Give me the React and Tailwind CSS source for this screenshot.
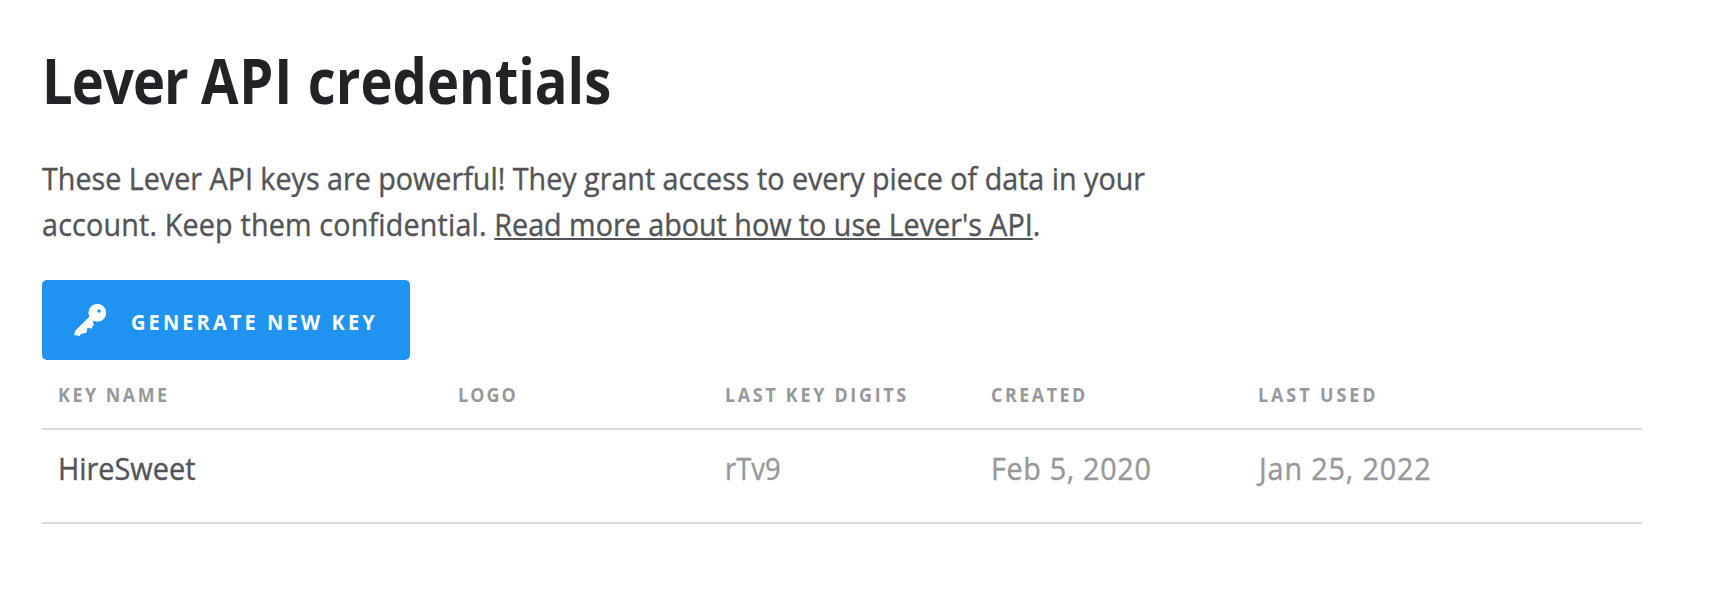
const columns = ["Key name", "Logo", "Last key digits", "Created", "Last used"];
const labelTracking = ["tracking-[2.7px]", "tracking-[2.2px]", "tracking-[2.9px]", "tracking-[2.7px]", "tracking-[3.15px]"];
const keys = [{ name: "HireSweet", digits: "rTv9", created: "Feb 5, 2020", used: "Jan 25, 2022" }];
const gridClass = "grid grid-cols-[400px_266.67px_266.67px_266.67px_400px] border-b-2 border-[#d8d8d9]";
const cellText = "block w-max origin-left";

function KeyIcon() {
  return (
    <svg className="h-[34px] w-[34px] shrink-0" viewBox="0 0 34 34" fill="#fff">
      <path
        fillRule="evenodd"
        d="M24.3 1A8.8 8.8 0 1 1 20.7 17.83L19.8 19.2L21.1 21.4L20.2 23.1L19.3 22.7L19.2 24.7L18.1 26.1L17 24.7L14.1 25.5L13.6 29.8L7.8 31L6.8 32.9L1.2 31.9L1.9 28.1L16.4 13.7A8.8 8.8 0 0 1 24.3 1ZM26 6.3A1.7 1.7 0 1 0 26 9.7A1.7 1.7 0 1 0 26 6.3Z"
      />
    </svg>
  );
}

export default function App() {
  return (
    <main className="min-h-[606px] w-[1730px] overflow-hidden bg-white pt-12 pl-[42px] font-['Open_Sans','Noto_Sans',sans-serif] text-[#535457]">
      <h1 className="w-max origin-left scale-x-[0.862] text-[63px] leading-[64px] font-bold text-[#222327]">
        <span className="tracking-[-1.05px]">Lever </span>
        <span className="tracking-[0.9px]">API </span>
        credentials
      </h1>
      <p className="mt-[43px] text-[31.5px] leading-[46px] whitespace-nowrap [-webkit-text-stroke:0.4px_currentColor]">
        <span className="block w-max origin-left scale-x-[0.911]">
          These Lever API keys are powerful! They grant access to every piece of data in your
        </span>
        <span className="block w-max origin-left scale-x-[0.911]">
          <span className="tracking-[0.2px]">account. Keep them confidential. </span>
          <a className="underline decoration-2 underline-offset-[2px] [text-decoration-skip-ink:none]">Read more about how to use Lever's API</a>.
        </span>
      </p>
      <button className="mt-[33px] flex h-20 w-[368px] items-center rounded-[5px] bg-[#2093f1] pl-[31px] text-white">
        <KeyIcon />
        <span className="ml-6 w-max origin-left scale-x-[0.91] pt-[2px] text-[22px] font-bold tracking-[3.4px] whitespace-nowrap uppercase">
          Generate new key
        </span>
      </button>
      <section className="w-[1600px]">
        <div className={`${gridClass} h-[70px] pt-[21px] text-[19px] leading-7 font-bold text-[#97989a] uppercase`}>
          {columns.map((c, i) => (
            <div key={c} className="pl-4">
              <span className={`${cellText} scale-x-[0.94] ${labelTracking[i]}`}>{c}</span>
            </div>
          ))}
        </div>
        {keys.map((k) => (
          <div key={k.name} className={`${gridClass} h-[94px] pt-[15px] text-[31.5px] leading-[46px] text-[#97989a] [-webkit-text-stroke:0.4px_currentColor]`}>
            <div className="pl-[15.5px] text-[#535457]"><span className={`${cellText} scale-x-[0.916]`}>{k.name}</span></div>
            <div />
            <div className="pl-[16px]"><span className={`${cellText} scale-x-[0.87]`}>{k.digits}</span></div>
            <div className="pl-[16px]"><span className={`${cellText} scale-x-[0.912] tracking-[0.75px]`}>{k.created}</span></div>
            <div className="pl-[17px]"><span className={`${cellText} scale-x-[0.912] tracking-[0.95px]`}>{k.used}</span></div>
          </div>
        ))}
      </section>
    </main>
  );
}
